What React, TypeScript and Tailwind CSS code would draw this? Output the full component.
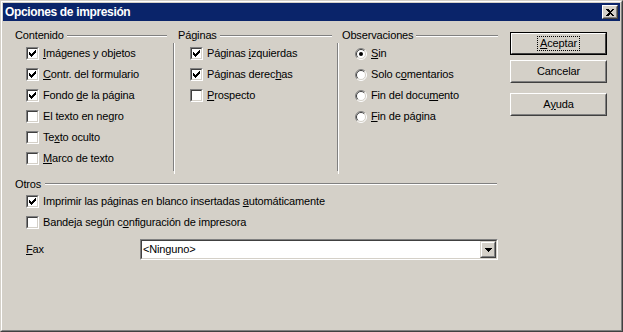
import React from 'react';

const FONT = "font-['Liberation_Sans',Arial,sans-serif]";

// "&" marks the mnemonic letter, drawn underlined
function Label({ text }: { text: string }) {
  const i = text.indexOf('&');
  if (i < 0) return <>{text}</>;
  return (
    <>
      {text.slice(0, i)}
      <u className="underline-offset-[1px]">{text[i + 1]}</u>
      {text.slice(i + 2)}
    </>
  );
}

function CheckBox({ checked }: { checked?: boolean }) {
  return (
    <div className="h-[13px] w-[13px] shrink-0 border border-t-[#808080] border-l-[#808080] border-b-white border-r-white">
      <div className="h-full w-full border border-t-[#404040] border-l-[#404040] border-b-[#d4d0c8] border-r-[#d4d0c8] bg-white">
        {checked && (
          <svg width="9" height="9" viewBox="0 0 9 9" shapeRendering="crispEdges" className="block">
            <rect x="1" y="3" width="1" height="3" fill="#000" />
            <rect x="2" y="4" width="1" height="3" fill="#000" />
            <rect x="3" y="5" width="1" height="3" fill="#000" />
            <rect x="4" y="4" width="1" height="3" fill="#000" />
            <rect x="5" y="3" width="1" height="3" fill="#000" />
            <rect x="6" y="2" width="1" height="3" fill="#000" />
            <rect x="7" y="1" width="1" height="3" fill="#000" />
          </svg>
        )}
      </div>
    </div>
  );
}

function Radio({ checked }: { checked?: boolean }) {
  return (
    <svg width="12" height="12" viewBox="0 0 12 12" className="block shrink-0">
      <circle cx="6" cy="6" r="5" fill="#fff" />
      <path d="M9.9 2.1 A5.5 5.5 0 0 0 2.1 9.9" fill="none" stroke="#808080" />
      <path d="M2.1 9.9 A5.5 5.5 0 0 0 9.9 2.1" fill="none" stroke="#fff" />
      <path d="M9.2 2.8 A4.5 4.5 0 0 0 2.8 9.2" fill="none" stroke="#404040" />
      <path d="M2.8 9.2 A4.5 4.5 0 0 0 9.2 2.8" fill="none" stroke="#d4d0c8" />
      {checked && <circle cx="6" cy="6" r="2" fill="#000" />}
    </svg>
  );
}

function CheckRow({ text, checked }: { text: string; checked?: boolean }) {
  return (
    <div className="flex h-[21px] items-center gap-[4px]">
      <CheckBox checked={checked} />
      <span className="whitespace-nowrap">
        <Label text={text} />
      </span>
    </div>
  );
}

function RadioRow({ text, checked }: { text: string; checked?: boolean }) {
  return (
    <div className="flex h-[21px] items-center gap-[4px]">
      <Radio checked={checked} />
      <span className="whitespace-nowrap">
        <Label text={text} />
      </span>
    </div>
  );
}

function Line({ className = '' }: { className?: string }) {
  return <div className={`h-[2px] flex-1 border-t border-b border-t-[#808080] border-b-white ${className}`} />;
}

function Heading({ text, className = '', lineClass = '' }: { text: string; className?: string; lineClass?: string }) {
  return (
    <div className={`flex h-[15px] items-center ${className}`}>
      <span className="whitespace-nowrap">{text}</span>
      <Line className={lineClass} />
    </div>
  );
}

function VBody({ children, pad }: { children: React.ReactNode; pad: string }) {
  return (
    <div className="mt-[3px] h-[128px] border-l border-l-[#808080]">
      <div className={`-mt-[3px] h-[131px] border-l border-l-white ${pad}`}>{children}</div>
    </div>
  );
}

function Button({ text, isDefault }: { text: string; isDefault?: boolean }) {
  if (isDefault) {
    return (
      <div className="h-[23px] w-[97px] border border-black">
        <div className="flex h-full w-full items-center justify-center border border-t-white border-l-white border-b-[#404040] border-r-[#404040]">
          <span className="border border-dotted border-black px-[2px] leading-[13px]">
            <Label text={text} />
          </span>
        </div>
      </div>
    );
  }
  return (
    <div className="h-[23px] w-[97px] border border-t-white border-l-white border-b-[#404040] border-r-[#404040]">
      <div className="flex h-full w-full items-center justify-center border border-t-[#d4d0c8] border-l-[#d4d0c8] border-b-[#808080] border-r-[#808080]">
        <Label text={text} />
      </div>
    </div>
  );
}

function ComboBox() {
  return (
    <div className="flex h-[21px] w-[358px] border border-t-[#808080] border-l-[#808080] border-b-white border-r-white">
      <div className="flex flex-1 items-center border border-t-[#404040] border-l-[#404040] border-b-[#d4d0c8] border-r-[#d4d0c8] bg-white">
        <span className="flex-1 pl-[1px]">&lt;Ninguno&gt;</span>
        <div className="h-full w-[16px] border border-t-[#d4d0c8] border-l-[#d4d0c8] border-b-[#404040] border-r-[#404040] bg-[#d4d0c8]">
          <div className="flex h-full w-full items-center justify-center border border-t-white border-l-white border-b-[#808080] border-r-[#808080]">
            <svg width="7" height="4" viewBox="0 0 7 4" shapeRendering="crispEdges" className="block">
              <path d="M0 0H7V1H6V2H5V3H4V4H3V3H2V2H1V1H0Z" fill="#000" />
            </svg>
          </div>
        </div>
      </div>
    </div>
  );
}

export default function App() {
  return (
    <div className={`h-[332px] w-[623px] border border-t-[#d4d0c8] border-l-[#d4d0c8] border-b-[#404040] border-r-[#404040] bg-[#d4d0c8] text-[11px] leading-[13px] tracking-[-0.15px] text-black ${FONT}`}>
      <div className="h-full w-full border border-t-white border-l-white border-b-[#808080] border-r-[#808080] p-[1px]">
        {/* title bar */}
        <div className="flex h-[18px] items-center justify-between bg-[#0a246a] pl-[2px] pr-[2px]">
          <span className="text-[12px] font-bold tracking-[-0.35px] text-white">Opciones de impresión</span>
          <div className="h-[14px] w-[16px] border border-t-white border-l-white border-b-[#404040] border-r-[#404040] bg-[#d4d0c8]">
            <div className="flex h-full w-full items-center justify-center border border-t-[#d4d0c8] border-l-[#d4d0c8] border-b-[#808080] border-r-[#808080]">
              <svg width="8" height="7" viewBox="0 0 8 7" shapeRendering="crispEdges" className="block">
                <path d="M0 0H2L4 2L6 0H8L5 3.5L8 7H6L4 5L2 7H0L3 3.5Z" fill="#000" />
              </svg>
            </div>
          </div>
        </div>

        {/* body */}
        <div className="flex pl-[10px] pt-[7px]">
          <div className="w-[487px]">
            <div className="flex">
              <div className="w-[160px]">
                <Heading text="Contenido" className="pl-[2px]" lineClass="ml-[3px] mr-[6px]" />
                <div className="pl-[13px]">
                  <CheckRow text="&Imágenes y objetos" checked />
                  <CheckRow text="&Contr. del formulario" checked />
                  <CheckRow text="Fondo &de la página" checked />
                  <CheckRow text="El texto en ne&gro" />
                  <CheckRow text="Te&xto oculto" />
                  <CheckRow text="&Marco de texto" />
                </div>
              </div>
              <div className="w-[164px]">
                <Heading text="Páginas" className="pl-[5px]" lineClass="ml-[3px] mr-[5px]" />
                <VBody pad="pl-[15px]">
                  <CheckRow text="Páginas &izquierdas" checked />
                  <CheckRow text="Páginas derec&has" checked />
                  <CheckRow text="&Prospecto" />
                </VBody>
              </div>
              <div className="w-[163px]">
                <Heading text="Observaciones" className="pl-[5px]" lineClass="ml-[3px] mr-[2px]" />
                <VBody pad="pl-[16px]">
                  <RadioRow text="&Sin" checked />
                  <RadioRow text="Solo c&omentarios" />
                  <RadioRow text="Fin del docu&mento" />
                  <RadioRow text="&Fin de página" />
                </VBody>
              </div>
            </div>

            <div className="mt-[6px]">
              <div className="flex h-[14px] items-center pl-[2px]">
                <span>Otros</span>
                <Line className="ml-[4px] mr-[3px]" />
              </div>
              <div className="pl-[13px]">
                <CheckRow text="Imprimir las páginas en blanco insertadas &automáticamente" checked />
                <CheckRow text="Bandeja según c&onfiguración de impresora" />
              </div>
              <div className="mt-[6px] flex h-[21px] items-center pl-[13px]">
                <span className="w-[114px]">
                  <Label text="&Fax" />
                </span>
                <ComboBox />
              </div>
            </div>
          </div>

          <div className="ml-[10px] flex w-[97px] flex-col pt-[4px]">
            <Button text="&Aceptar" isDefault />
            <div className="mt-[5px]">
              <Button text="Cancelar" />
            </div>
            <div className="mt-[10px]">
              <Button text="A&yuda" />
            </div>
          </div>
        </div>
      </div>
    </div>
  );
}
